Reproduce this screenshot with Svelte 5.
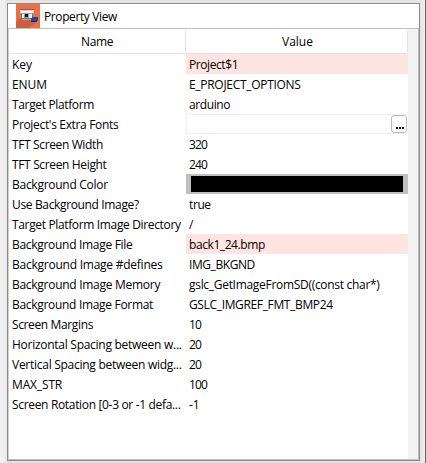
<script>
  // ns / vs: letter-spacing in px for the name and the value
  const rows = [
    { name: 'Key', value: 'Project$1', kind: 'locked', ns: -0.1, vs: -0.42 },
    { name: 'ENUM', value: 'E_PROJECT_OPTIONS', ns: -0.1, vs: -0.3 },
    { name: 'Target Platform', value: 'arduino', ns: -0.35, vs: -0.4 },
    { name: "Project's Extra Fonts", value: '', kind: 'picker', ns: -0.33, vs: 0 },
    { name: 'TFT Screen Width', value: '320', ns: -0.37, vs: -0.8 },
    { name: 'TFT Screen Height', value: '240', ns: -0.35, vs: -0.8 },
    { name: 'Background Color', value: '', kind: 'color', ns: -0.27, vs: 0 },
    { name: 'Use Background Image?', value: 'true', ns: -0.35, vs: -0.4 },
    { name: 'Target Platform Image Directory', value: '/', ns: -0.35, vs: 0 },
    { name: 'Background Image File', value: 'back1_24.bmp', kind: 'locked', ns: -0.3, vs: -0.42 },
    { name: 'Background Image #defines', value: 'IMG_BKGND', ns: -0.24, vs: -0.42 },
    { name: 'Background Image Memory', value: 'gslc_GetImageFromSD((const char*)', ns: -0.28, vs: -0.3 },
    { name: 'Background Image Format', value: 'GSLC_IMGREF_FMT_BMP24', ns: -0.31, vs: -0.35 },
    { name: 'Screen Margins', value: '10', ns: -0.37, vs: -0.8 },
    { name: 'Horizontal Spacing between w...', value: '20', ns: -0.27, vs: -0.8 },
    { name: 'Vertical Spacing between widg...', value: '20', ns: -0.27, vs: -0.8 },
    { name: 'MAX_STR', value: '100', ns: -0.15, vs: -0.8 },
    { name: 'Screen Rotation [0-3 or -1 defa...', value: '-1', ns: -0.33, vs: 0 }
  ];
</script>

<div class="desktop">
  <section class="frame">
    <header class="title">
      <svg class="icon" width="24" height="24" viewBox="0 0 24 24" shape-rendering="crispEdges">
        <path fill="#eb7045" d="M0 0h24v24H0z" />
        <path fill="#cf5f3c" shape-rendering="auto" d="M4 14 0 18v6h13l8-7v-3z" />
        <path fill="#8b5f55" d="M4 5h14v1H4z" />
        <path fill="#d6d3d0" d="M4 6h14v4H4z" />
        <path fill="#f2f2f2" d="M5 7h12v2H5z" />
        <path fill="#999" d="M4 9h14v1H4z" />
        <path fill="#777" d="M5 10h12v5H5z" />
        <path fill="#e8ecec" d="M6 10h10v4H6z" />
        <path fill="#999" d="M8 9h5v5H8z" />
        <path fill="#171717" d="M9 10h3v3H9z" />
        <path fill="#b7a7a1" d="M6 15h9v1H6z" />
        <path fill="#2448a0" d="M16 13h6v4h-7v-3h1z" />
        <path fill="#0d2b7a" d="M15 17h6v1h-6z" />
      </svg>
      <span>Property View</span>
    </header>
    <div class="content">
      <div class="table">
        <div class="head">
          <div class="hname">Name</div>
          <div class="hvalue">Value</div>
        </div>
        {#each rows as row}
          <div class="row">
            <div class="name" style="letter-spacing: {row.ns}px">{row.name}</div>
            <div class="value {row.kind ?? ''}" style="letter-spacing: {row.vs}px">
              {#if row.kind === 'picker'}
                <button aria-label="Choose fonts"><i></i><i></i><i></i></button>
              {:else if row.kind === 'color'}
                <div class="swatch"></div>
              {:else}{row.value}{/if}
            </div>
          </div>
        {/each}
      </div>
      <div class="track"></div>
    </div>
  </section>
</div>

<style>
  :global(body) { margin: 0; overflow: hidden; }
  .desktop {
    box-sizing: border-box;
    width: 426px;
    height: 463px;
    padding: 3px 5px 2px 7px;
    background: linear-gradient(90deg, #f0f0f0 0 4px, #e4e4e4 7px, #e4e4e4 420px, #eee 425px);
    border-right: 1px solid #696969;
    font: 12px/20px "Open Sans", "Noto Sans", sans-serif;
    color: #000;
  }
  .frame {
    box-sizing: border-box;
    width: 413px;
    height: 458px;
    border: 1px solid #8c8c8c;
    background: #fff;
    display: flex;
    flex-direction: column;
  }
  .title {
    box-sizing: border-box;
    height: 24px;
    display: flex;
    align-items: center;
    padding-left: 8px;
    gap: 4px;
    white-space: nowrap;
    letter-spacing: -.39px;
  }
  .title span { padding-top: 2px; }
  .content {
    box-sizing: border-box;
    flex: 1;
    display: flex;
    border: 1px solid #bfbfbf;
    border-left-color: #d0d0d0;
  }
  .table { width: 399px; }
  .track { flex: 1; background: #f3f3f3; }
  .head {
    box-sizing: border-box;
    height: 25px;
    display: flex;
    border-bottom: 1px solid #e5e5e5;
    padding: 1px 0;
    line-height: 23px;
    text-align: center;
  }
  .head div { box-sizing: border-box; border-right: 1px solid #e5e5e5; height: 22px; }
  .hname { width: 177px; letter-spacing: -.4px; }
  .hvalue { width: 222px; padding-left: 2px; }
  .row { display: flex; height: 20px; }
  .name, .value {
    box-sizing: border-box;
    padding-left: 3px;
    white-space: nowrap;
    height: 20px;
    line-height: 21px;
  }
  .name { width: 177px; }
  .value { width: 222px; }
  .locked { background: #ffe4e1; }
  .picker {
    border: 1px solid #f0f0f0;
    border-right: 0;
    padding: 0 1px 0 0;
    display: flex;
    justify-content: flex-end;
  }
  button {
    box-sizing: border-box;
    width: 16px;
    height: 18px;
    border: 1px solid #bbb;
    border-radius: 3px;
    background: #fff;
    padding: 0 2px 3px 4px;
    display: flex;
    align-items: flex-end;
    gap: 1px;
  }
  button i { width: 2px; height: 2px; background: #201030; }
  .color { background: #c0c0c0; padding: 2px 5px; }
  .swatch { height: 16px; background: #000; }
</style>
